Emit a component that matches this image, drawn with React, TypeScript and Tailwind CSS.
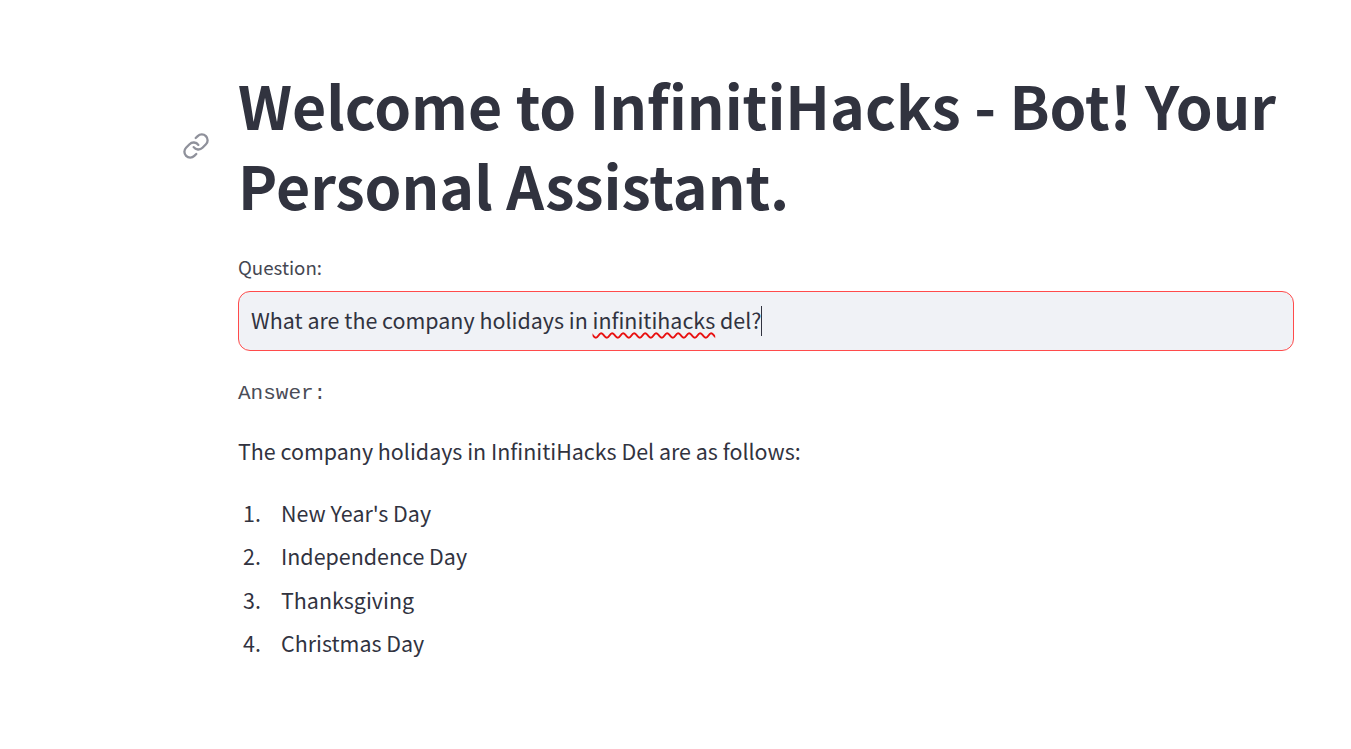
const sans = "font-['Noto_Sans_CJK_SC','Noto_Sans',sans-serif]";

function LinkIcon() {
  return (
    <svg viewBox="0 0 24 24" fill="none" stroke="#8f919b" strokeWidth="2" strokeLinecap="round" strokeLinejoin="round" className="absolute left-[-56px] top-[67px] h-[28px] w-[28px]">
      <path d="M10 13a5 5 0 0 0 7.54.54l3-3a5 5 0 0 0-7.07-7.07l-1.72 1.71" />
      <path d="M14 11a5 5 0 0 0-7.54-.54l-3 3a5 5 0 0 0 7.07 7.07l1.71-1.71" />
    </svg>
  );
}

const items = ["New Year's Day", "Independence Day", "Thanksgiving", "Christmas Day"];

export default function App() {
  return (
    <div className={`${sans} min-h-[749px] bg-white pl-[238px] pr-[57px] pt-[65px] text-[#31333f]`}>
      <h1 className="relative text-[59px] font-bold leading-[80px] tracking-normal">
        <LinkIcon />
        Welcome to InfinitiHacks - Bot! Your Personal Assistant.
      </h1>
      <div className="mt-[28px] text-[18.7px] leading-[28px] opacity-90">Question:</div>
      <div className="mt-[10px] flex h-[60px] items-center whitespace-pre rounded-[12px] border border-[#ff4b4b] bg-[#f0f2f6] pb-[2px] pl-[12px] text-[21.45px]">
        <span>What are the company holidays in </span>
        <span className="underline decoration-[#e81010] decoration-wavy decoration-[1.5px] underline-offset-[3px]">infinitihacks</span>
        <span> del?</span>
        <span className="mt-[2px] h-[30px] w-px bg-[#31333f]" />
      </div>
      <div className="mt-[28px] font-['Liberation_Mono',monospace] text-[21px] leading-[30px] text-[#4a4c57]">Answer:</div>
      <p className="mt-[26px] text-[21.45px] leading-[32px]">The company holidays in InfinitiHacks Del are as follows:</p>
      <ol className="mt-[30px] flex flex-col gap-[11.3px] text-[21.45px] leading-[32px]">
        {items.map((t, i) => (
          <li key={t} className="flex">
            <span className="w-[43px] pl-[5px]">{i + 1}.</span>
            <span>{t}</span>
          </li>
        ))}
      </ol>
    </div>
  );
}
